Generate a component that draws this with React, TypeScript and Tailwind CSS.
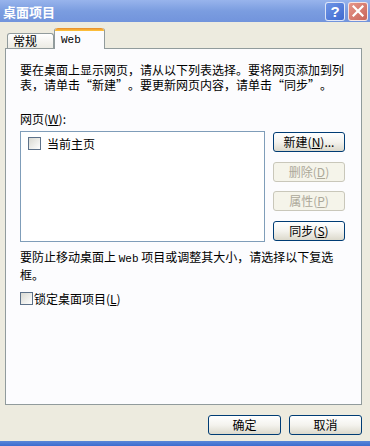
import React from 'react';

const cjk = "font-['Noto_Sans_CJK_SC',sans-serif]";

function Checkbox() {
  return (
    <span className="inline-block w-[13px] h-[13px] border border-[#5d7189] bg-linear-to-br from-[#d9d9d2] to-white shrink-0" />
  );
}

// full-width curly quotes, as the dialog's bitmap font draws them
function OpenQ() {
  return <span className="inline-block w-[12px] text-right">“</span>;
}
function CloseQ() {
  return <span className="inline-block w-[12px] text-left">”</span>;
}

function Button({ children, disabled, className = '' }: { children: React.ReactNode; disabled?: boolean; className?: string }) {
  return (
    <div
      className={`flex items-center justify-center rounded-[3px] border text-[12px] leading-none ${
        disabled
          ? 'border-[#c9c7ba] bg-[#f5f4ea] text-[#aca899]'
          : 'border-[#003c74] bg-linear-to-b from-white via-[#f4f3ee] to-[#dcd9cc] text-black'
      } ${className}`}
    >
      {children}
    </div>
  );
}

export default function App() {
  return (
    <div className={`w-[370px] h-[446px] bg-[#edebdf] flex flex-col overflow-hidden ${cjk}`}>
      {/* title bar */}
      <div className="h-[22px] shrink-0 flex items-center justify-between bg-linear-to-b from-[#98b4ec] via-[#7b9de0] to-[#7294dc] pl-[3px] pr-[2px]">
        <span className="text-white font-bold text-[13px] leading-none">桌面项目</span>
        <div className="flex gap-[3px] items-center">
          <div className="w-[20px] h-[19px] rounded-[3px] border border-white/80 bg-linear-to-br from-[#6f95e6] to-[#3f69cf] flex items-center justify-center text-white font-bold text-[15px] leading-none font-['Liberation_Sans',sans-serif]">
            ?
          </div>
          <div className="w-[20px] h-[19px] rounded-[3px] border border-white/80 bg-linear-to-br from-[#e6968a] to-[#c8655a] flex items-center justify-center">
            <svg width="12" height="12" viewBox="0 0 12 12">
              <path d="M1.5 1.5 L10.5 10.5 M10.5 1.5 L1.5 10.5" stroke="white" strokeWidth="2.2" strokeLinecap="square" />
            </svg>
          </div>
        </div>
      </div>

      <div className="px-[5px] pt-[6px]">
        {/* tabs */}
        <div className="flex items-end pl-[2px] h-[20px] relative z-10">
          <div className="w-[47px] h-[15px] border border-b-0 border-[#919b9c] rounded-t-[3px] bg-linear-to-b from-white to-[#ecebe4] flex items-center pl-[5px] text-[12px] leading-none">
            常规
          </div>
          <div className="w-[51px] h-[21px] -mb-px border border-b-0 border-[#919b9c] border-t-0 rounded-t-[3px] bg-[#fcfcfe] flex flex-col">
            <div className="h-[3px] rounded-t-[3px] bg-linear-to-b from-[#e68b2c] to-[#ffc73c]" />
            <div className="flex-1 flex items-center pl-[6px] text-[11px] leading-none font-['Liberation_Mono',monospace]">Web</div>
          </div>
        </div>

        {/* panel */}
        <div className="w-[357px] h-[357px] border border-[#919b9c] bg-[#fcfcfe] px-[14px] pt-[13px] text-[12px] text-black">
          <div className="leading-[15px] whitespace-nowrap">
            <div>要在桌面上显示网页，请从以下列表选择。要将网页添加到列</div>
            <div>
              表，请单击<OpenQ />新建<CloseQ />。要更新网页内容，请单击<OpenQ />同步<CloseQ />。
            </div>
          </div>

          <div className="mt-[19px] leading-[15px]">
            网页(<u>W</u>):
          </div>

          <div className="mt-[5px] flex items-start">
            <div className="w-[245px] h-[111px] border border-[#7f9db9] bg-white pl-[7px] pt-[5px]">
              <div className="flex items-center gap-[6px] leading-[13px]">
                <Checkbox />
                <span>当前主页</span>
              </div>
            </div>
            <div className="ml-[8px] flex flex-col pt-px">
              <Button className="w-[72px] h-[20px]">
                新建(<u>N</u>)...
              </Button>
              <Button disabled className="w-[72px] h-[20px] mt-[10px]">
                删除(<u>D</u>)
              </Button>
              <Button disabled className="w-[72px] h-[20px] mt-[9px]">
                属性(<u>P</u>)
              </Button>
              <Button className="w-[72px] h-[20px] mt-[10px]">
                同步(<u>S</u>)
              </Button>
            </div>
          </div>

          <div className="mt-[7px] leading-[15px] whitespace-nowrap">
            <div>
              要防止移动桌面上 <span className="font-['Liberation_Mono',monospace] text-[11px]">Web</span> 项目或调整其大小，请选择以下复选
            </div>
            <div>框。</div>
          </div>

          <div className="mt-[10px] flex items-center gap-[1px] leading-[13px]">
            <Checkbox />
            <span>锁定桌面项目(<u>L</u>)</span>
          </div>
        </div>

        {/* bottom buttons */}
        <div className="flex justify-end gap-[8px] mt-[10px] pr-[3px]">
          <Button className="w-[73px] h-[20px]">确定</Button>
          <Button className="w-[73px] h-[20px]">取消</Button>
        </div>
      </div>

      <div className="mt-auto h-[5px] bg-linear-to-b from-[#5a86d8] to-[#3c6ccf]" />
    </div>
  );
}
